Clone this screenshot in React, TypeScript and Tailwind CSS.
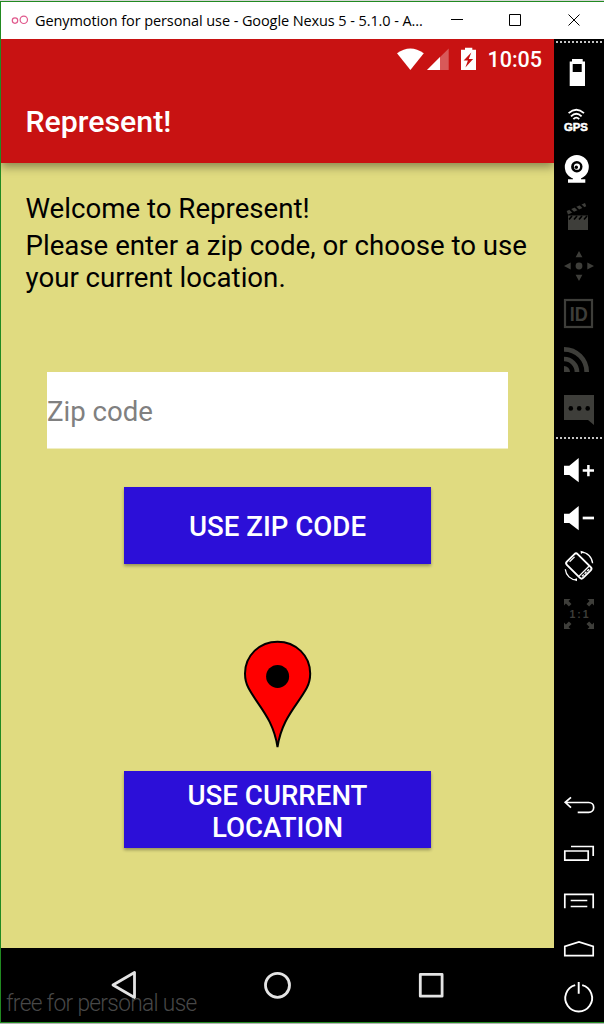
import type { ReactNode } from "react";

const DIM = "#3e3e3a";

function Slot({ label, children }: { label: string; children: ReactNode }) {
  return (
    <button aria-label={label} className="block h-12 w-[50px] shrink-0">
      <svg width="50" height="48" viewBox="0 0 50 48" fill="none" className="block overflow-visible">
        {children}
      </svg>
    </button>
  );
}

function Dots() {
  return (
    <svg width="50" height="2" viewBox="0 0 50 2" className="block shrink-0">
      <path d="M2 1H48" stroke="#c4c4c4" strokeWidth="2" strokeDasharray="2 2" />
    </svg>
  );
}

function Speaker() {
  return <path d="M10 19.7h5.3L24.7 12v24.3L15.3 29H10z" fill="#fff" />;
}

function Sidebar() {
  return (
    <aside className="flex w-[50px] shrink-0 flex-col bg-black pt-[2px]">
      <Dots />
      <div className="h-[5px]" />
      <Slot label="Battery">
        <path fillRule="evenodd" d="M18 11h10.7v2.5H31V38H15.7V13.5H18zM18.7 16v8h9v-8z" fill="#fff" />
      </Slot>
      <Slot label="GPS">
        <g stroke="#fff" strokeWidth="1.8">
          <path d="M14.6 17.2Q22.3 10.4 30 17.2" />
          <path d="M17 20.3Q22.3 15.2 27.6 20.3" />
          <path d="M19.4 23.2Q22.3 20 25.2 23.2" />
        </g>
        <text x="9.9" y="34.9" textLength="24" lengthAdjust="spacingAndGlyphs" fill="#fff" stroke="#fff" strokeWidth="0.5" className="font-['Liberation_Sans',sans-serif] text-[10.5px] font-bold">GPS</text>
      </Slot>
      <Slot label="Camera">
        <circle cx="22.8" cy="22.9" r="12" fill="#fff" />
        <path d="M19 33h8v2.3h4.3v3.4H14v-3.4h5z" fill="#fff" />
        <circle cx="22.8" cy="22.7" r="5.7" fill="#000" />
        <circle cx="23" cy="22.7" r="3.1" fill="#fff" />
        <circle cx="22.3" cy="23.2" r="1.7" fill="#000" />
      </Slot>
      <Slot label="Capture">
        <path d="M14 23.5h20V38H14z" fill={DIM} />
        <path d="M15 27.5l3-3.5M20 27.5l3-3.5M25 27.5l3-3.5M30 27.5l3-3.5" stroke="#000" strokeWidth="1.7" />
        <path d="M12.7 19L31 11l1.2 3.2L14 22.5z" fill={DIM} />
        <path d="M15.8 17l3.6 3.5M21 14.7l3.6 3.5M26.2 12.5l3.6 3.5" stroke="#000" strokeWidth="1.8" />
      </Slot>
      <Slot label="Remote">
        <circle cx="25" cy="26" r="3.4" fill={DIM} />
        <path d="M25 11l3.4 6.3h-6.8zM25 41l3.4-6.3h-6.8zM10 26l6.7-3.4v6.8zM40 26l-6.7-3.4v6.8z" fill={DIM} />
      </Slot>
      <Slot label="Identifiers">
        <rect x="11" y="12" width="27" height="27" stroke={DIM} strokeWidth="2.2" />
        <text x="15.8" y="32.7" textLength="18" lengthAdjust="spacingAndGlyphs" fill={DIM} className="font-['Liberation_Sans',sans-serif] text-[20px] font-bold">ID</text>
      </Slot>
      <Slot label="Network">
        <path d="M10 13.3A22.7 22.7 0 0 1 32.7 36M10 23A13 13 0 0 1 23 36" stroke={DIM} strokeWidth="4.7" />
        <path d="M10 30a6 6 0 0 1 6 6h-6z" fill={DIM} />
      </Slot>
      <Slot label="Phone">
        <path d="M10 11h30v30l-6-5H10z" fill={DIM} />
        <circle cx="16.8" cy="24.4" r="2.3" fill="#000" />
        <circle cx="25.2" cy="24.4" r="2.3" fill="#000" />
        <circle cx="33.7" cy="24.4" r="2.3" fill="#000" />
      </Slot>
      <div className="h-[5px]" />
      <Dots />
      <div className="h-[7px]" />
      <Slot label="Volume up">
        <Speaker />
        <path d="M28.7 24.6H40M34.4 19v11.3" stroke="#fff" strokeWidth="2.5" />
      </Slot>
      <Slot label="Volume down">
        <Speaker />
        <path d="M28.7 24H40" stroke="#fff" strokeWidth="2.7" />
      </Slot>
      <Slot label="Rotate">
        <g transform="translate(24.8 24) rotate(45)">
          <rect x="-11.5" y="-7.6" width="23" height="15.2" rx="2.2" stroke="#fff" strokeWidth="1.9" />
          <path d="M7.3 -7V7" stroke="#fff" strokeWidth="1.3" />
          <path d="M9.5 -5v10" stroke="#fff" strokeWidth="1.4" strokeDasharray="2.6 1.1" />
          <path d="M-9.5 -3.5v7" stroke="#fff" strokeWidth="1.2" />
        </g>
        <path d="M27 10.2C33.5 10.5 38 14.8 38.6 21.3M11.3 27.3C12 33.5 16.5 37.8 22.7 38" stroke="#fff" strokeWidth="1.3" />
        <path d="M26.5 8.8l3.5 1.3-3 2zM23 36.3l-3 1 3 2z" fill="#fff" />
      </Slot>
      <Slot label="Pixel perfect">
        <path d="M10 9h6.5l-2 2 3 3-2.6 2.6-3-3-1.9 2zM40 9h-6.5l2 2-3 3 2.6 2.6 3-3 1.9 2zM10 39h6.5l-2-2 3-3-2.6-2.6-3 3-1.9-2zM40 39h-6.5l2-2-3-3 2.6-2.6 3 3 1.9-2z" fill={DIM} />
        <text x="15.5" y="27.8" textLength="19" fill={DIM} className="font-['Liberation_Sans',sans-serif] text-[10.5px] font-bold">1:1</text>
      </Slot>
      <div className="flex-1" />
      <Slot label="Back">
        <path d="M17 16.3l-5.8 5 5.8 5.4M11.2 21.5H34.8a4.9 4.9 0 0 1 0 9.8H23.7" stroke="#fff" strokeWidth="1.7" />
      </Slot>
      <Slot label="Recent apps">
        <path d="M10.8 22h23.4v9.2H10.8zM17 17.5h22.2V27" stroke="#fff" strokeWidth="1.7" />
      </Slot>
      <Slot label="Menu">
        <path d="M10.8 31.3V17.4h28.4v13.9M16.7 23.5h16.6M16.7 29.5h16.6" stroke="#fff" strokeWidth="1.7" />
      </Slot>
      <Slot label="Home">
        <path d="M10.8 30.7V21.4L25 17l14.2 4.4v9.3z" stroke="#fff" strokeWidth="1.7" />
      </Slot>
      <Slot label="Power">
        <path d="M21.2 12.1A13.4 13.4 0 1 0 28.2 12.1M24.7 9v11.7" stroke="#fff" strokeWidth="1.9" />
      </Slot>
      <div className="h-px" />
    </aside>
  );
}

function TitleBar() {
  return (
    <header className="flex h-[37px] shrink-0 items-center bg-white">
      <svg width="34" height="37" viewBox="0 0 34 37" fill="none" stroke="#e0588c" strokeWidth="1.2" className="shrink-0">
        <circle cx="14" cy="18.6" r="2.7" />
        <circle cx="22.8" cy="17.8" r="3.7" />
      </svg>
      <h1 className="w-[390px] shrink-0 whitespace-nowrap font-['Open_Sans',sans-serif] text-[14.5px] leading-[37px] tracking-[-0.09px] text-black">
        Genymotion for personal use - Google Nexus 5 - 5.1.0 - A...
      </h1>
      <svg width="179" height="37" viewBox="425 2 179 37" fill="none" stroke="#000" className="shrink-0">
        <path d="M451 19.5h12M509.5 14.5h11v11h-11zM568.5 14.5l11 11M579.5 14.5l-11 11" />
      </svg>
    </header>
  );
}

function StatusBar() {
  return (
    <div className="flex h-10 items-center justify-end pr-3">
      <svg width="82" height="24" viewBox="396 46 82 24" className="-mt-px shrink-0">
        <path d="M397 52.3Q410.3 42.5 423.8 52.3L410.4 69z" fill="#fff" />
        <path d="M448.7 47.5V69H427z" fill="#fff" fillOpacity=".3" />
        <path d="M440 56.1V69H427z" fill="#fff" />
        <path d="M465 46.7h7.3v2H476V69h-15V48.7h4z" fill="#fff" />
        <path d="M471.3 51.5l-7.7 8h4.3l-2.5 7 7.7-8.5h-4.3z" fill="#c81212" />
      </svg>
      <time className="ml-[9px] mt-[2px] font-[Roboto,sans-serif] text-[21.5px] font-medium leading-6 text-white">10:05</time>
    </div>
  );
}

function NavBar() {
  return (
    <nav className="relative h-[74px] shrink-0 bg-black">
      <svg width="553" height="74" viewBox="1 948 553 74" fill="none" stroke="#e4e4e4" strokeWidth="2.8" strokeLinejoin="round" className="block">
        <path d="M113 985L134.5 972.5v25z" />
        <circle cx="277.5" cy="985.3" r="12" />
        <rect x="420.3" y="974.4" width="21.8" height="21.8" />
      </svg>
      <span className="absolute left-[5px] top-[40px] origin-left scale-x-[0.945] whitespace-nowrap font-[Roboto,sans-serif] text-[24px] font-light leading-[30px] tracking-[-0.7px] text-[#484848]">
        free for personal use
      </span>
    </nav>
  );
}

function Phone() {
  return (
    <main className="flex w-[553px] shrink-0 flex-col bg-[#e0db80] font-[Roboto,sans-serif]">
      <div className="z-10 h-[124px] shrink-0 bg-[#c81212] shadow-[0_4px_9px_rgba(0,0,0,0.38)] [clip-path:inset(0_0_-20px_0)]">
        <StatusBar />
        <h2 className="pl-[24.5px] pt-[25px] text-[30.3px] font-medium leading-9 text-white">Represent!</h2>
      </div>
      <section className="flex flex-1 flex-col text-[27.65px] leading-8 text-black">
        <p className="pl-[24.5px] pt-[30px]">Welcome to Represent!</p>
        <p className="whitespace-nowrap pl-[24.5px] pt-[5px]">
          Please enter a zip code, or choose to use
          <br />
          your current location.
        </p>
        <div className="mt-[78px] flex flex-col items-center">
          <input
            aria-label="Zip code"
            placeholder="Zip code"
            className="h-[77px] w-[461px] rounded-none border-b border-[#f0eec4] bg-white p-0 pt-[2px] text-[27.6px] outline-none placeholder:text-[#808080]"
          />
          <button className="mt-[38px] h-[77px] w-[307px] bg-[#2c0fd8] pt-[2px] font-medium text-white shadow-[0_2px_3px_rgba(0,0,0,0.32)]">
            USE ZIP CODE
          </button>
          <svg width="70" height="110" viewBox="243 639 70 110" className="mt-[75px]">
            <path
              d="M277.5 747C273 718 258 706 248.5 688C246 683.5 245 678.5 245 673.5C245 655.5 259.5 641.7 277.6 641.7C295.7 641.7 310.2 655.5 310.2 673.5C310.2 678.5 309.2 683.5 306.7 688C297 706 282 718 277.5 747z"
              fill="#f00"
              stroke="#000"
              strokeWidth="2"
            />
            <circle cx="277.6" cy="676.4" r="11.5" fill="#000" />
          </svg>
          <button className="mt-[22px] h-[77px] w-[307px] bg-[#2c0fd8] pt-[5px] font-medium text-white shadow-[0_2px_3px_rgba(0,0,0,0.32)]">
            USE CURRENT
            <br />
            LOCATION
          </button>
        </div>
      </section>
      <NavBar />
    </main>
  );
}

export default function App() {
  return (
    <div className="flex h-[1024px] w-[604px] flex-col overflow-hidden border-b border-t border-b-[#b4b4b4] border-t-[#d8d8d8]">
      <div className="flex min-h-0 flex-1 flex-col border-y border-l border-[#218a21]">
        <TitleBar />
        <div className="flex min-h-0 flex-1">
          <Phone />
          <Sidebar />
        </div>
      </div>
    </div>
  );
}
